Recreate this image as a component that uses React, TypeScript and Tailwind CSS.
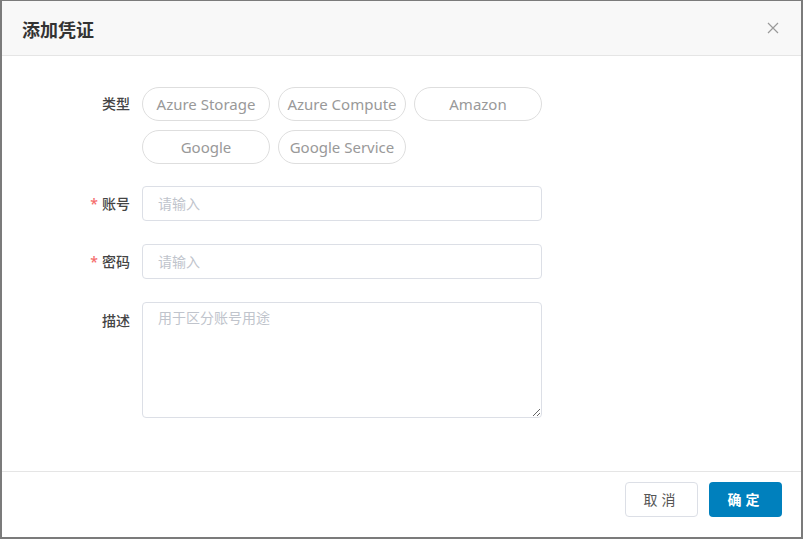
import { useState } from 'react';

const TYPES = ['Azure Storage', 'Azure Compute', 'Amazon', 'Google', 'Google Service'];

export default function App() {
  const [type, setType] = useState<string | null>(null);

  return (
    <div
      className="w-[803px] h-[539px] bg-[#7b7b7b] pl-[2px] pr-[2px] pt-px pb-[2px]"
      style={{ fontFamily: '"Noto Sans", "Noto Sans CJK SC", sans-serif' }}
    >
      <div className="flex flex-col h-full bg-white">
        {/* 头部 */}
        <div className="flex items-center justify-between h-[55px] shrink-0 pl-5 pr-[22px] bg-[#f8f8f8] border-b border-[#e5e5e5]">
          <h2 className="pt-[4px] text-[18px] font-bold text-[#333]">添加凭证</h2>
          <button className="text-[#9a9a9a]">
            <svg className="w-[12px] h-[12px]" viewBox="0 0 12 12" fill="none" stroke="currentColor" strokeWidth={1.2}>
              <path d="M1 1l10 10M11 1L1 11" />
            </svg>
          </button>
        </div>

        {/* 表单 */}
        <div className="flex-1 pt-[31px]">
          <div className="flex">
            <label className="w-[140px] pt-[6px] pr-3 text-right text-[14px] font-medium text-[#444]">类型</label>
            <div className="flex flex-wrap w-[410px] gap-x-2 gap-y-[9px]">
              {TYPES.map(t => (
                <button
                  key={t}
                  onClick={() => setType(t)}
                  className={`w-[128px] h-[34px] rounded-full border text-[15px] ${type === t ? 'border-[#007fbd] text-[#007fbd]' : 'border-[#dedede] text-[#999]'}`}
                >
                  {t}
                </button>
              ))}
            </div>
          </div>

          <div className="flex items-center mt-[22px]">
            <label className="w-[140px] pr-3 text-right text-[14px] font-medium text-[#444]">
              <span className="text-[#f56c6c] mr-1">*</span>账号
            </label>
            <input
              placeholder="请输入"
              className="w-[400px] h-[35px] px-[15px] rounded border border-[#dcdfe6] text-[14px] outline-none placeholder:text-[#c0c4cc]"
            />
          </div>

          <div className="flex items-center mt-[23px]">
            <label className="w-[140px] pr-3 text-right text-[14px] font-medium text-[#444]">
              <span className="text-[#f56c6c] mr-1">*</span>密码
            </label>
            <input
              placeholder="请输入"
              className="w-[400px] h-[35px] px-[15px] rounded border border-[#dcdfe6] text-[14px] outline-none placeholder:text-[#c0c4cc]"
            />
          </div>

          <div className="flex mt-[23px]">
            <label className="w-[140px] pt-[8px] pr-3 text-right text-[14px] font-medium text-[#444]">描述</label>
            <textarea
              placeholder="用于区分账号用途"
              className="w-[400px] h-[116px] px-[15px] py-[4px] rounded border border-[#dcdfe6] text-[14px] outline-none placeholder:text-[#c0c4cc]"
            />
          </div>
        </div>

        {/* 底部 */}
        <div className="flex justify-end gap-[11px] h-[66px] shrink-0 pt-[10px] pr-[19px] border-t border-[#e5e5e5]">
          <button className="w-[73px] h-[35px] rounded border border-[#dcdfe6] bg-white text-[14px] tracking-[4px] text-[#555]">
            取消
          </button>
          <button className="w-[73px] h-[35px] rounded bg-[#0080bd] text-[14px] font-bold tracking-[4px] text-white">
            确定
          </button>
        </div>
      </div>
    </div>
  );
}
